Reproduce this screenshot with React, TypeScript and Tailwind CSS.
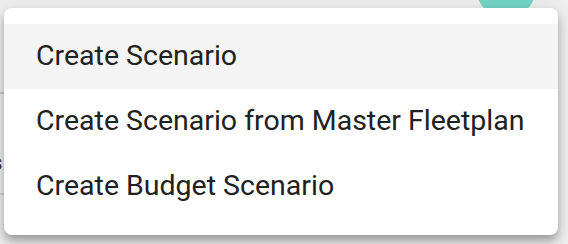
import React from 'react';

const items = ['Create Scenario', 'Create Scenario from Master Fleetplan', 'Create Budget Scenario'];

export default function App() {
    return (
        <div className="relative w-[568px] h-[244px] overflow-hidden bg-[#eeeeee]" style={{ fontFamily: 'Roboto, "Noto Sans", sans-serif' }}>
            {/* page behind the menu */}
            <div className="absolute left-[476px] top-[-42px] w-[60px] h-[60px] rounded-full bg-[#72d4c6]" />
            <div className="absolute left-0 top-[92px] w-[6px] h-[2px] bg-[#cfcfcf]" />
            <div className="absolute left-0 top-[193px] w-[6px] h-[2px] bg-[#cfcfcf]" />
            <div className="absolute left-[-9px] top-[146px] text-[22px] font-medium text-[#333]">s</div>

            {/* menu */}
            <div className="absolute left-[4px] top-[8px] w-[554px] rounded-[8px] bg-white py-4 shadow-[0_5px_6px_-3px_rgba(0,0,0,0.2),0_8px_10px_1px_rgba(0,0,0,0.14),0_3px_14px_2px_rgba(0,0,0,0.12)]">
                {items.map((label, i) => (
                    <div
                        key={label}
                        className={`flex items-center h-[65px] pl-[32px] text-[28.5px] leading-none text-[#212121] ${i === 0 ? 'bg-[#f4f4f4]' : ''}`}
                    >
                        {label}
                    </div>
                ))}
            </div>
        </div>
    );
}
